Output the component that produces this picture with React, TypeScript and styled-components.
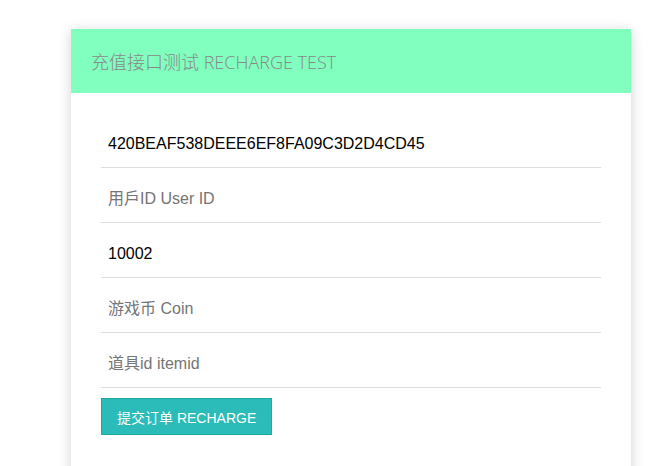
import React from "react"
import styled, { createGlobalStyle } from "styled-components"

const GlobalStyle = createGlobalStyle`
  html, body {
    margin: 0;
    padding: 0;
    background: #fff;
    font-family: "Liberation Sans", "Noto Sans CJK SC", sans-serif;
  }
`

const fields = [
  { value: "420BEAF538DEEE6EF8FA09C3D2D4CD45", placeholder: "" },
  { value: "", placeholder: "用戶ID User ID" },
  { value: "10002", placeholder: "" },
  { value: "", placeholder: "游戏币 Coin" },
  { value: "", placeholder: "道具id itemid" },
]

export default function App() {
  return (
    <>
      <GlobalStyle />
      <Page>
        <Card>
          <Header>充值接口测试 RECHARGE TEST</Header>
          <Body>
            {fields.map((f, i) => (
              <Input key={i} defaultValue={f.value} placeholder={f.placeholder} />
            ))}
            <Button type="button">提交订单 RECHARGE</Button>
          </Body>
        </Card>
      </Page>
    </>
  )
}

const Page = styled.div`
  padding: 29px 0 0 71px;
  height: 466px;
  box-sizing: border-box;
  overflow: hidden;
`

const Card = styled.div`
  width: 560px;
  min-height: 480px;
  background: #fff;
  box-shadow: 0 2px 12px rgba(0, 0, 0, 0.18);
`

const Header = styled.div`
  height: 64px;
  display: flex;
  align-items: center;
  padding: 0 20px;
  background: #80ffbf;
  color: #888;
  font-family: "Open Sans", "Noto Sans CJK SC", sans-serif;
  font-weight: 300;
  font-size: 18px;
`

const Body = styled.div`
  display: flex;
  flex-direction: column;
  align-items: flex-start;
  padding: 20px 30px;
`

const Input = styled.input`
  width: 100%;
  height: 55px;
  box-sizing: border-box;
  border: none;
  border-bottom: 1px solid #ddd;
  padding: 8px 7px 0;
  outline: none;
  font-family: "Liberation Sans", "Noto Sans CJK SC", sans-serif;
  font-size: 16px;
  color: #000;
  background: transparent;

  &::placeholder {
    color: #757575;
  }
`

const Button = styled.button`
  margin-top: 10px;
  height: 37px;
  padding: 0 15px;
  background: #2bbbb8;
  border: 1px solid #1fa9a5;
  color: #fff;
  font-family: "Liberation Sans", "Noto Sans CJK SC", sans-serif;
  font-size: 14px;
  cursor: pointer;
`
